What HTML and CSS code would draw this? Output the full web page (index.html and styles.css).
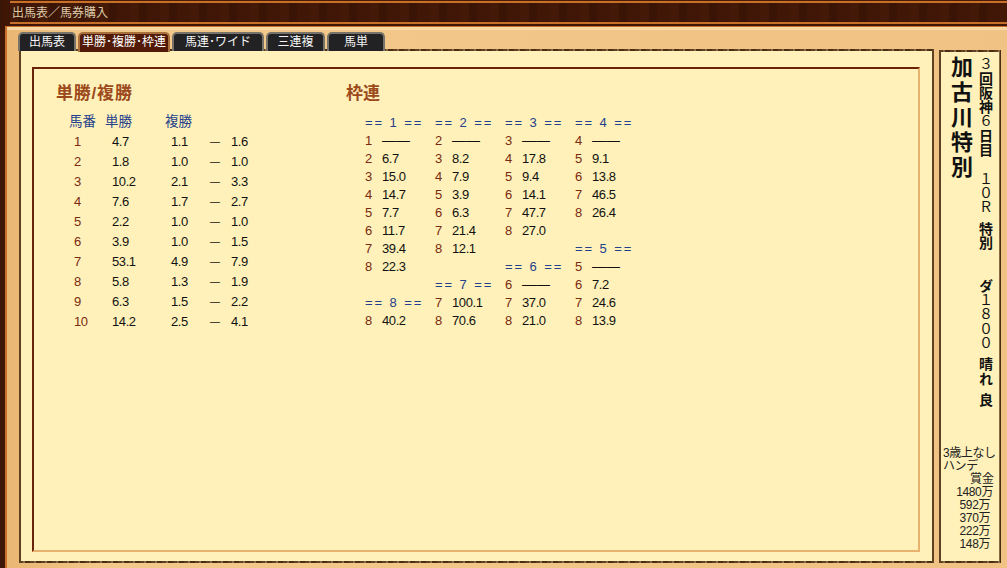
FILE: index.html
```html
<!DOCTYPE html>
<html lang="ja">
<head>
<meta charset="utf-8">
<title>出馬表／馬券購入</title>
<link rel="stylesheet" href="styles.css">
</head>
<body>
<div class="window">
  <div class="top-strip"></div>
  <header class="titlebar">出馬表／馬券購入</header>
  <div class="wood">
    <div class="left-col">
      <nav class="tabs">
        <div class="tab t1">出馬表</div>
        <div class="tab t2 active">単勝･複勝･枠連</div>
        <div class="tab t3">馬連･ワイド</div>
        <div class="tab t4">三連複</div>
        <div class="tab t5">馬単</div>
      </nav>
      <main class="panel">
        <div class="inner">
          <section class="win">
            <h2>単勝/複勝</h2>
            <div class="wintable">
              <div class="wh">馬番</div><div class="wh">単勝</div><div class="wh">複勝</div><div></div><div></div>
              <div class="n">1</div><div class="w">4.7</div><div class="p">1.1</div><div class="d">—</div><div class="h">1.6</div>
              <div class="n">2</div><div class="w">1.8</div><div class="p">1.0</div><div class="d">—</div><div class="h">1.0</div>
              <div class="n">3</div><div class="w">10.2</div><div class="p">2.1</div><div class="d">—</div><div class="h">3.3</div>
              <div class="n">4</div><div class="w">7.6</div><div class="p">1.7</div><div class="d">—</div><div class="h">2.7</div>
              <div class="n">5</div><div class="w">2.2</div><div class="p">1.0</div><div class="d">—</div><div class="h">1.0</div>
              <div class="n">6</div><div class="w">3.9</div><div class="p">1.0</div><div class="d">—</div><div class="h">1.5</div>
              <div class="n">7</div><div class="w">53.1</div><div class="p">4.9</div><div class="d">—</div><div class="h">7.9</div>
              <div class="n">8</div><div class="w">5.8</div><div class="p">1.3</div><div class="d">—</div><div class="h">1.9</div>
              <div class="n">9</div><div class="w">6.3</div><div class="p">1.5</div><div class="d">—</div><div class="h">2.2</div>
              <div class="n">10</div><div class="w">14.2</div><div class="p">2.5</div><div class="d">—</div><div class="h">4.1</div>
            </div>
          </section>
          <section class="frame">
            <h2>枠連</h2>
            <div class="frame-cols">
              <div class="fc">
                <div class="fh">== 1 ==</div>
                <div class="fr"><b>1</b><span class="line">――</span></div>
                <div class="fr"><b>2</b><span>6.7</span></div>
                <div class="fr"><b>3</b><span>15.0</span></div>
                <div class="fr"><b>4</b><span>14.7</span></div>
                <div class="fr"><b>5</b><span>7.7</span></div>
                <div class="fr"><b>6</b><span>11.7</span></div>
                <div class="fr"><b>7</b><span>39.4</span></div>
                <div class="fr"><b>8</b><span>22.3</span></div>
                <div class="fr"></div>
                <div class="fh">== 8 ==</div>
                <div class="fr"><b>8</b><span>40.2</span></div>
              </div>
              <div class="fc">
                <div class="fh">== 2 ==</div>
                <div class="fr"><b>2</b><span class="line">――</span></div>
                <div class="fr"><b>3</b><span>8.2</span></div>
                <div class="fr"><b>4</b><span>7.9</span></div>
                <div class="fr"><b>5</b><span>3.9</span></div>
                <div class="fr"><b>6</b><span>6.3</span></div>
                <div class="fr"><b>7</b><span>21.4</span></div>
                <div class="fr"><b>8</b><span>12.1</span></div>
                <div class="fr"></div>
                <div class="fh">== 7 ==</div>
                <div class="fr"><b>7</b><span>100.1</span></div>
                <div class="fr"><b>8</b><span>70.6</span></div>
              </div>
              <div class="fc">
                <div class="fh">== 3 ==</div>
                <div class="fr"><b>3</b><span class="line">――</span></div>
                <div class="fr"><b>4</b><span>17.8</span></div>
                <div class="fr"><b>5</b><span>9.4</span></div>
                <div class="fr"><b>6</b><span>14.1</span></div>
                <div class="fr"><b>7</b><span>47.7</span></div>
                <div class="fr"><b>8</b><span>27.0</span></div>
                <div class="fr"></div>
                <div class="fh">== 6 ==</div>
                <div class="fr"><b>6</b><span class="line">――</span></div>
                <div class="fr"><b>7</b><span>37.0</span></div>
                <div class="fr"><b>8</b><span>21.0</span></div>
              </div>
              <div class="fc">
                <div class="fh">== 4 ==</div>
                <div class="fr"><b>4</b><span class="line">――</span></div>
                <div class="fr"><b>5</b><span>9.1</span></div>
                <div class="fr"><b>6</b><span>13.8</span></div>
                <div class="fr"><b>7</b><span>46.5</span></div>
                <div class="fr"><b>8</b><span>26.4</span></div>
                <div class="fr"></div>
                <div class="fh">== 5 ==</div>
                <div class="fr"><b>5</b><span class="line">――</span></div>
                <div class="fr"><b>6</b><span>7.2</span></div>
                <div class="fr"><b>7</b><span>24.6</span></div>
                <div class="fr"><b>8</b><span>13.9</span></div>
              </div>
            </div>
          </section>
        </div>
      </main>
    </div>
    <aside class="side">
      <div class="side-top">
        <div class="race-name">加古川特別</div>
        <div class="race-info"><span class="thin">３</span>回阪神<span class="thin">６</span>日目　<span class="thin">１０Ｒ</span><span class="hs"></span>特別　　ダ<span class="thin">１８００</span><span class="hs"></span>晴れ<span class="hs"></span>良</div>
      </div>
      <div class="side-bottom">
        <div>3歳上なし</div>
        <div>ハンデ</div>
        <div class="prize-head">賞金</div>
        <div class="prize wide">1480万</div>
        <div class="prize">592万</div>
        <div class="prize">370万</div>
        <div class="prize">222万</div>
        <div class="prize">148万</div>
      </div>
    </aside>
  </div>
</div>
</body>
</html>
```

FILE: styles.css
```css
* { box-sizing: border-box; }
html, body { margin: 0; padding: 0; }
body {
  width: 1007px;
  height: 568px;
  overflow: hidden;
  background: #3a1608;
  font-family: "Liberation Sans", "Noto Sans CJK JP", sans-serif;
  font-size: 13px;
  color: #111;
}
.window {
  width: 1007px;
  height: 568px;
  display: flex;
  flex-direction: column;
  border-left: 2px solid #3a1608;
  background: #3f1606;
}
.top-strip {
  height: 3px;
  flex: none;
  background: linear-gradient(#4a1c06 0 1px, #c8702a 1px 3px);
  margin-left: 8px;
}
.titlebar {
  flex: none;
  height: 21px;
  margin-left: 8px;
  padding-left: 2px;
  line-height: 20px;
  font-size: 12px;
  color: #dccbaa;
  background:
    repeating-linear-gradient(92deg, rgba(90,40,10,.18) 0 9px, rgba(20,5,0,.12) 9px 17px, rgba(70,28,8,.16) 17px 30px),
    #3f1606;
  border-bottom: 2px solid #c8702a;
}
.wood {
  flex: 1;
  min-height: 0;
  display: flex;
  margin-left: 3px;
  margin-top: 2px;
  border-left: 2px solid #c8702a;
  border-top: 1px solid #c8702a;
  padding: 5px 6px 5px 12px;
  background: linear-gradient(90deg, #eab673, #f3c98b 10%, #f0c283 100%);
  box-shadow: inset 0 3px 0 #f7d8a4;
}
.left-col {
  width: 915px;
  flex: none;
  display: flex;
  flex-direction: column;
}
.tabs {
  display: flex;
  height: 19px;
  flex: none;
  position: relative;
  z-index: 1;
}
.tab {
  height: 19px;
  margin-right: 2px;
  border: 2px solid #77736a;
  border-bottom: 0;
  border-radius: 5px 5px 0 0;
  background: #222224;
  color: #f4f4f4;
  font-size: 12px;
  line-height: 17px;
  text-align: center;
  white-space: nowrap;
}
.t1 { width: 58px; margin-left: -1px; }
.t2 { width: 92px; }
.t3 { width: 92px; }
.t4 { width: 59px; }
.t5 { width: 58px; }
.tab.active {
  background: #521a06;
  color: #fff;
  height: 20px;
  border-color: #a8703c;
}
.panel {
  flex: 1;
  min-height: 0;
  padding: 16px 12px 9px 11px;
  background: #fff1b9;
  border: 2px solid #7b5a34;
  border-image: repeating-linear-gradient(90deg, #5f4022 0 4px, #8a6a42 4px 6px, #4a2e14 6px 11px) 2;
  margin-top: -2px;
}
.inner {
  height: 100%;
  display: flex;
  padding: 15px 0 0 22px;
  border: 2px solid #6a2208;
  border-right-color: #e6b26e;
  border-bottom-color: #e6b26e;
}
h2 {
  margin: 0;
  font-size: 17px;
  line-height: 20px;
  font-weight: bold;
  color: #9c4a1c;
}
.win h2 { letter-spacing: .8px; }
.win { width: 290px; flex: none; }
.wintable {
  margin-top: 8px;
  margin-left: 13px;
  display: grid;
  grid-template-columns: 36px 60px 40px 26px 30px;
  grid-auto-rows: 20px;
  line-height: 20px;
  letter-spacing: -.4px;
}
.wh { color: #24408c; white-space: nowrap; letter-spacing: 0; font-size: 13.5px; }
.n { color: #7a2a10; padding-left: 5px; }
.w { padding-left: 7px; }
.p { padding-left: 6px; }
.d { padding-left: 5px; font-size: 10px; }
.frame { flex: 1; }
.frame-cols {
  display: flex;
  margin-top: 10px;
  margin-left: 19px;
}
.fc { width: 70px; flex: none; }
.fh, .fr { height: 18px; line-height: 18px; white-space: nowrap; }
.fh { color: #24408c; letter-spacing: 1.9px; }
.fr b { font-weight: normal; color: #7a2a10; display: inline-block; width: 17px; }
.fr span { letter-spacing: -.4px; }
.fr .line { font-size: 14px; letter-spacing: 0; line-height: 14px; }
.side {
  width: 62px;
  flex: none;
  margin-left: 5px;
  margin-top: 18px;
  display: flex;
  flex-direction: column;
  justify-content: space-between;
  background: #fff1b9;
  border: 2px solid #7b5a34;
  border-image: repeating-linear-gradient(90deg, #5f4022 0 4px, #8a6a42 4px 6px, #4a2e14 6px 11px) 2;
  padding: 5px 5px 10px 2px;
}
.side-top {
  display: flex;
  height: 360px;
}
.race-name {
  writing-mode: vertical-rl;
  font-size: 22px;
  line-height: 26px;
  font-weight: bold;
  letter-spacing: 2.8px;
  margin-left: 3px;
  margin-top: -1px;
}
.race-info {
  writing-mode: vertical-rl;
  text-orientation: upright;
  font-size: 14px;
  line-height: 18px;
  font-weight: bold;
  letter-spacing: .3px;
  white-space: pre;
  margin-left: 4px;
}
.thin { font-weight: normal; }
.hs { display: inline-block; width: 0; height: 7px; }
.side-bottom { font-size: 12px; line-height: 13px; letter-spacing: -.4px; color: #222; white-space: nowrap; }
.prize-head { text-align: right; letter-spacing: 0; }
.prize { text-align: right; padding-right: 4px; }
.prize.wide { padding-right: 1px; }
```
